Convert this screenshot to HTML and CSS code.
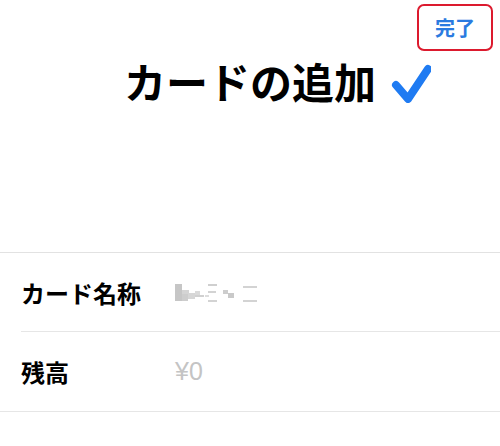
FILE: index.html
```html
<!DOCTYPE html>
<html>
<head>
    <meta charset="utf-8">
    <title>カードの追加</title>
    <link rel="stylesheet" href="styles.css">
</head>
<body>

    <div class="header">
        <div class="done-box">
            <a href="#" class="done-button">完了</a>
        </div>
        <h1 class="title">カードの追加<svg class="check" width="40" height="40" viewBox="0 0 40 40">
                <polyline points="5,22 17,36 37,6" fill="none" stroke="#1f7bf2" stroke-width="8" stroke-linecap="round" stroke-linejoin="round"/>
            </svg></h1>
    </div>

    <!-- Card details -->
    <div class="card-form">
        <div class="row inset">
            <span class="label">カード名称</span>
            <span class="value">
                <svg width="85" height="20" viewBox="0 0 85 20">
                    <rect x="0" y="1" width="7" height="17" fill="#c6c6c6"/>
                    <rect x="7" y="7" width="7" height="4" fill="#d4d4d4"/>
                    <rect x="7" y="11" width="6" height="7" fill="#cdcdcd"/>
                    <rect x="13" y="10" width="7" height="6" fill="#d6d6d6"/>
                    <rect x="20" y="8" width="5" height="4" fill="#dadada"/>
                    <rect x="20" y="12" width="9" height="2" fill="#d0d0d0"/>
                    <rect x="33" y="1" width="9" height="2" fill="#cfcfcf"/>
                    <rect x="33" y="8" width="8" height="2" fill="#d3d3d3"/>
                    <rect x="33" y="17" width="9" height="2" fill="#d3d3d3"/>
                    <rect x="30" y="12" width="4" height="2" fill="#dddddd"/>
                    <rect x="48" y="7" width="5" height="4" fill="#cdcdcd"/>
                    <rect x="53" y="10" width="6" height="5" fill="#c9c9c9"/>
                    <rect x="68" y="3" width="14" height="2" fill="#d3d3d3"/>
                    <rect x="68" y="17" width="14" height="2" fill="#d3d3d3"/>
                </svg>
            </span>
        </div>
        <div class="row">
            <span class="label">残高</span>
            <span class="value amount">¥0</span>
        </div>
    </div>

</body>
</html>
```

FILE: styles.css
```css
/* Basic page styles */
body {
    font-family: "Noto Sans CJK JP", "Noto Sans", sans-serif;
    background-color: #fff;
    color: #111;
    margin: 0;
    padding: 0;
}

.header {
    height: 252px;
    border-bottom: 1px solid #e2e2e2;
    position: relative;
    text-align: center;
}

.done-box {
    display: flex;
    justify-content: flex-end;
    padding: 4px 7px 0 0;
}

.done-button {
    display: block;
    width: 72px;
    height: 43px;
    line-height: 43px;
    border: 2.5px solid #dc1a2e;
    border-radius: 7px;
    color: #2a7ae0;
    font-size: 20px;
    font-weight: bold;
    text-decoration: none;
    text-align: center;
}

.title {
    display: inline-block;
    position: relative;
    margin: 5px 0 0 0;
    font-size: 42px;
    line-height: 50px;
    font-weight: bold;
    color: #000;
}

.check {
    position: absolute;
    left: calc(100% + 15px);
    top: 7px;
}

/* Rows */
.row {
    height: 79px;
    display: flex;
    align-items: center;
    padding-left: 21px;
    border-bottom: 1px solid #e6e6e6;
}

.row.inset {
    border-bottom: none;
    background-image: linear-gradient(#e6e6e6, #e6e6e6);
    background-size: calc(100% - 21px) 1px;
    background-position: 21px 100%;
    background-repeat: no-repeat;
}

.label {
    width: 154px;
    font-size: 24px;
    font-weight: bold;
    color: #000;
}

.value {
    display: flex;
    align-items: center;
    color: #c4c4c4;
}

.amount {
    font-family: "Liberation Sans", Arial, sans-serif;
    font-size: 25px;
}
```
